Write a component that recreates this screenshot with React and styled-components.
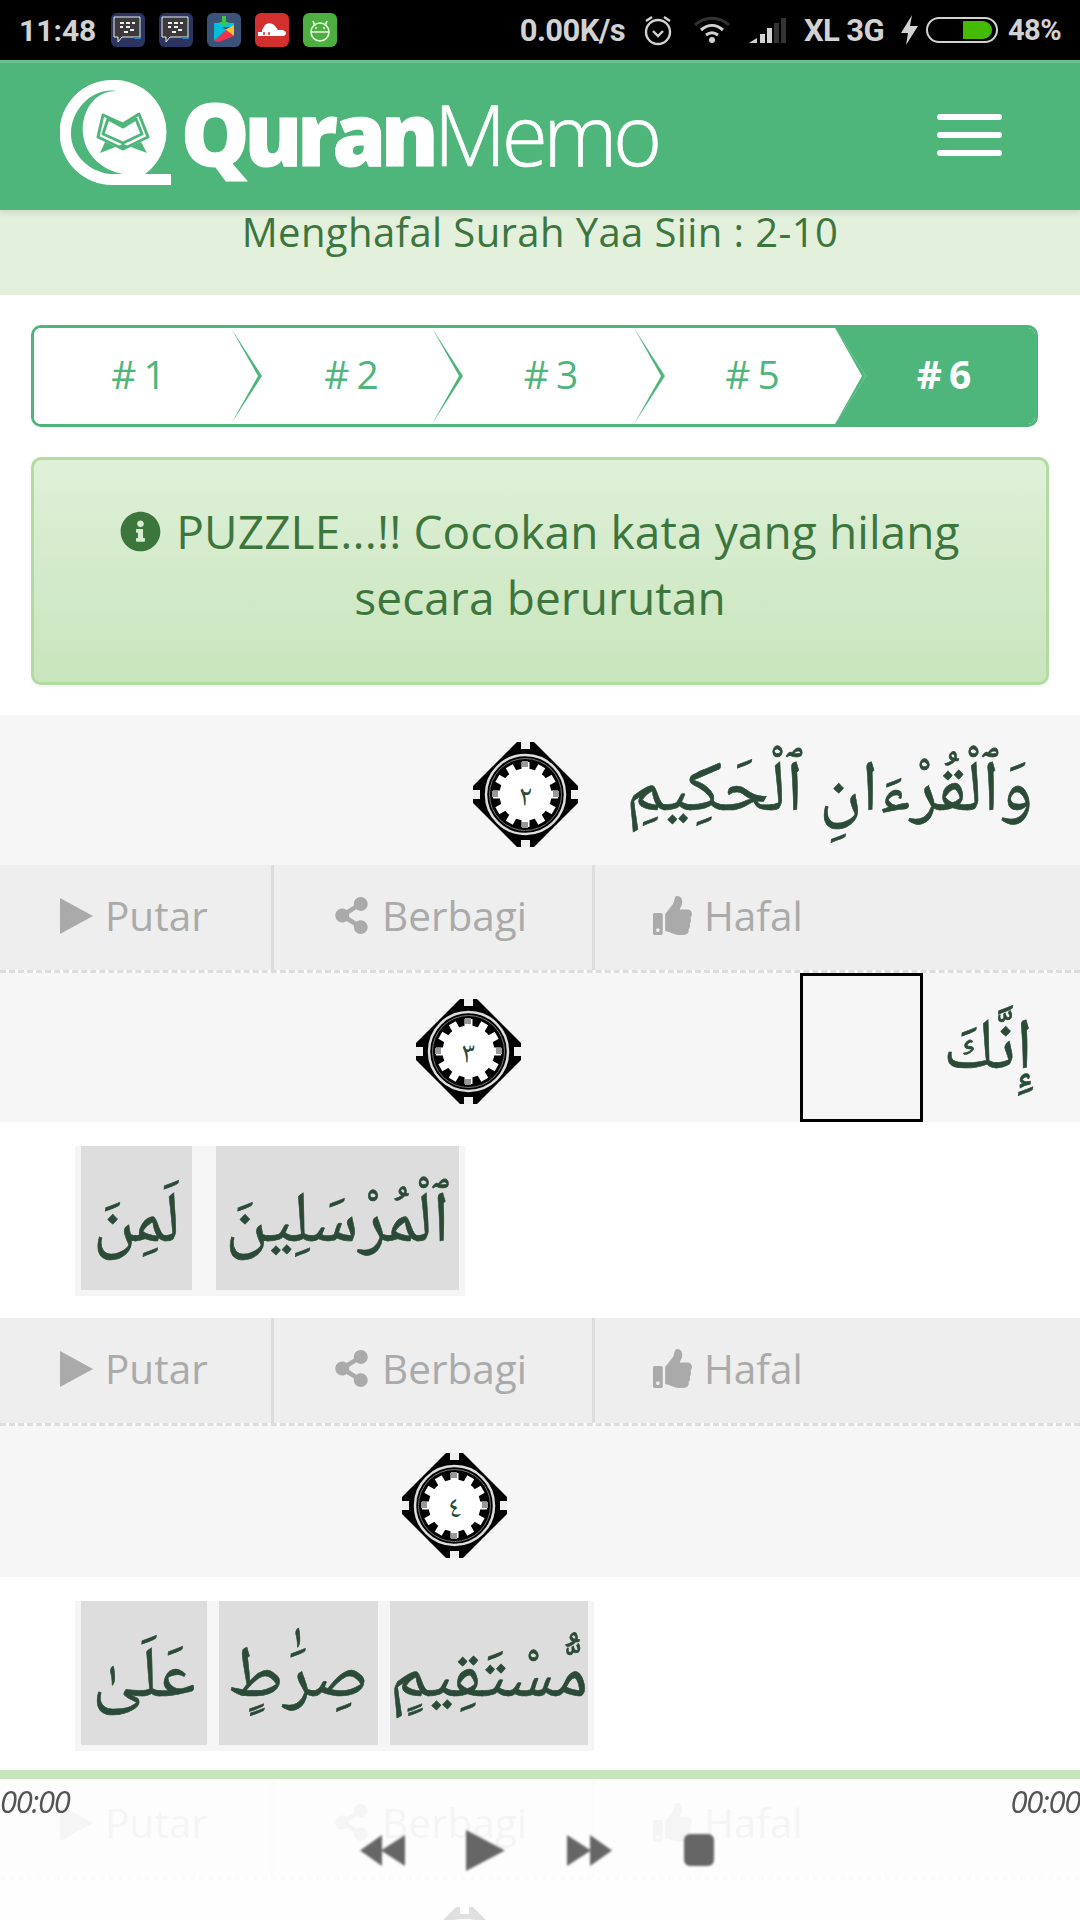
import styled, { createGlobalStyle } from "styled-components";
import { FaInfoCircle, FaShareAlt, FaThumbsUp } from "react-icons/fa";

const GlobalStyle = createGlobalStyle`
  html, body {
    margin: 0;
    padding: 0;
    height: 1920px;
    overflow: hidden;
    background: #fff;
    font-family: "Open Sans", "Noto Sans", sans-serif;
  }
  * { box-sizing: border-box; }
`;

const ARABIC = `"Noto Naskh Arabic", "Amiri", "Scheherazade", "DejaVu Sans", serif`;

const Page = styled.div`
  width: 1080px;
  height: 1920px;
  overflow: hidden;
  position: relative;
`;

/* status bar */
const StatusBar = styled.div`
  height: 60px;
  background: #000;
  color: #d2d2d2;
  display: flex;
  align-items: center;
  padding: 0 19px 0 19px;
  font-family: Roboto, sans-serif;
  font-weight: 700;
`;
const Clock = styled.span`
  font-size: 30px;
  width: 92px;
`;
const Notifs = styled.div`
  display: flex;
  gap: 14px;
`;
const NotifIcon = styled.svg`
  width: 34px;
  height: 34px;
  display: block;
`;
const Tray = styled.div`
  margin-left: auto;
  display: flex;
  align-items: center;
`;
const TrayText = styled.span`
  font-size: ${(p) => p.$size || 31}px;
  letter-spacing: -0.6px;
  margin-left: ${(p) => p.$left || 0}px;
`;
const TrayIcon = styled.svg`
  display: block;
  margin-left: ${(p) => p.$left || 0}px;
`;

/* header */
const Header = styled.header`
  height: 150px;
  background: #4fb67b;
  border-top: 3px solid #6cc190;
  box-shadow: 0 2px 8px rgba(0, 0, 0, 0.12);
  display: flex;
  align-items: center;
  justify-content: space-between;
  padding: 0 78px 0 60px;
  position: relative;
`;
const Logo = styled.div`
  display: flex;
  align-items: baseline;
  color: #fff;
  height: 106px;
  margin-top: -7px;
`;
const LogoMark = styled.svg`
  width: 112px;
  height: 106px;
  align-self: flex-start;
  margin-right: 9px;
`;
const LogoBold = styled.span`
  font-family: "Open Sans", sans-serif;
  font-weight: 800;
  font-size: 86px;
  line-height: 105px;
  letter-spacing: -5px;
  -webkit-text-stroke: 1px #fff;
`;
const LogoLight = styled.span`
  font-family: "Open Sans", sans-serif;
  font-weight: 300;
  font-size: 84px;
  line-height: 105px;
  letter-spacing: -4.5px;
  -webkit-text-stroke: 0.6px #fff;
`;
const Burger = styled.button`
  width: 65px;
  height: 42px;
  padding: 0;
  margin-top: -3px;
  border: 0;
  background: none;
  display: flex;
  flex-direction: column;
  justify-content: space-between;
  span {
    display: block;
    height: 6px;
    background: #fff;
    border-radius: 3px;
  }
`;

const SubBanner = styled.div`
  height: 85px;
  background: #e3f0dc;
  color: #3c763d;
  font-size: 40px;
  line-height: 44px;
  text-align: center;
  letter-spacing: 0.4px;
`;

/* steps */
const Steps = styled.nav`
  margin: 30px 42px 0 31px;
  height: 102px;
  display: flex;
  border: 3px solid #4fb67b;
  border-radius: 10px;
  overflow: hidden;
`;
const Step = styled.div`
  flex: ${(p) => (p.$active ? "1 1 auto" : `0 0 ${p.$w}px`)};
  position: relative;
  display: flex;
  align-items: center;
  justify-content: center;
  padding-left: ${(p) => p.$shift}px;
  padding-bottom: 6px;
  font-size: 39px;
  word-spacing: -3px;
  font-weight: ${(p) => (p.$active ? 700 : 400)};
  color: ${(p) => (p.$active ? "#fff" : "#4fb67b")};
  background: ${(p) => (p.$active ? "#4fb67b" : "#fff")};
  ${(p) =>
    !p.$active &&
    `
    &::before, &::after {
      content: "";
      position: absolute;
      top: 0;
      bottom: 0;
      left: 100%;
      width: 31px;
      z-index: 2;
    }
    &::before {
      background: #fff;
      clip-path: polygon(0 0, 100% 50%, 0 100%);
    }
    &::after {
      background: #4fb67b;
      z-index: 3;
      clip-path: polygon(0 0, 100% 50%, 0 100%, 0 100%, calc(100% - 4px) 50%, 0 0);
    }
  `}
`;

/* alert */
const Alert = styled.div`
  margin: 30px 31px 0 31px;
  height: 228px;
  border: 3px solid #b2dba1;
  border-radius: 10px;
  background: linear-gradient(to bottom, #dff0d8 0, #c8e5bc 100%);
  box-shadow: 0 2px 3px rgba(0, 0, 0, 0.06);
  color: #3c763d;
  font-size: 46px;
  line-height: 66px;
  letter-spacing: 0.1px;
  text-align: center;
  padding: 38px 60px 0;
  text-shadow: 0 1px 0 rgba(255, 255, 255, 0.2);
  svg {
    font-size: 41px;
    vertical-align: -3px;
    margin-right: 15px;
  }
`;

/* verses */
const Verse = styled.div`
  margin-top: ${(p) => p.$top || 0}px;
  height: ${(p) => p.$h || 150}px;
  background: #f6f6f6;
  display: flex;
  flex-direction: row-reverse;
  align-items: center;
  padding-right: 47px;
  flex-shrink: 0;
`;
const VerseText = styled.span`
  font-family: ${ARABIC};
  font-size: 72px;
  line-height: 1;
  padding-top: 10px;
  color: #2b4a38;
  -webkit-text-stroke: 0.6px #2b4a38;
  direction: rtl;
  white-space: nowrap;
`;
const Blank = styled.div`
  width: ${(p) => p.$w}px;
  height: 100%;
  margin-right: ${(p) => p.$gap || 0}px;
  border: ${(p) => (p.$outlined ? "3px solid #000" : "0")};
  flex-shrink: 0;
`;
const Ornament = styled.svg`
  width: 105px;
  height: 105px;
  flex-shrink: 0;
  margin-right: ${(p) => p.$right || 0}px;
  margin-top: 8px;
`;
const OrnamentArt = styled.g`
  filter: blur(0.7px);
`;

function Medallion({ n, right }) {
  const teeth = Array.from({ length: 12 }, (_, i) => i * 30);
  return (
    <Ornament viewBox="0 0 105 105" $right={right}>
      <OrnamentArt>
        <polygon
          points="44,0 61,0 105,44 105,61 61,105 44,105 0,61 0,44"
          fill="#000"
        />
        <g fill="#f0f0f0">
          <rect x="48" y="0" width="9" height="7" />
          <rect x="48" y="98" width="9" height="7" />
          <rect x="0" y="48" width="7" height="9" />
          <rect x="98" y="48" width="7" height="9" />
        </g>
        <circle cx="52.5" cy="52.5" r="39.5" fill="none" stroke="#ddd" strokeWidth="2.5" />
        <circle cx="52.5" cy="52.5" r="36" fill="none" stroke="#777" strokeWidth="1" />
        {teeth.map((a) => (
          <rect
            key={a}
            x="48.5"
            y="20"
            width="8"
            height="12"
            fill="#fff"
            transform={`rotate(${a} 52.5 52.5)`}
          />
        ))}
        <circle cx="52.5" cy="52.5" r="26" fill="#fff" />
        <g fill="#999">
          <rect x="49" y="19" width="6" height="6" />
          <rect x="49" y="80" width="6" height="6" />
          <rect x="19" y="49" width="6" height="6" />
          <rect x="80" y="49" width="6" height="6" />
        </g>
      </OrnamentArt>
      {n && (
        <text
          x="52.5"
          y="64"
          textAnchor="middle"
          fontSize="30"
          fill="#2b4a38"
          fontFamily={ARABIC}
        >
          {n}
        </text>
      )}
    </Ornament>
  );
}

/* action bar */
const Actions = styled.div`
  height: 105px;
  background: #eee;
  display: flex;
  flex-shrink: 0;
`;
const Action = styled.div`
  width: ${(p) => p.$w}px;
  padding: 0 0 4px ${(p) => p.$pad}px;
  border-right: ${(p) => (p.$divider ? "3px solid #ddd" : "0")};
  display: flex;
  align-items: center;
  color: #aaa;
  font-size: 40.5px;
  svg {
    margin-right: 12px;
    flex-shrink: 0;
  }
`;
const Dashes = styled.div`
  height: 3px;
  border-top: 3px dashed #ddd;
`;

/* word choices */
const PoolWrap = styled.div`
  background: #fff;
  height: ${(p) => p.$h}px;
  padding: 24px 0 0 75px;
`;
const Pool = styled.div`
  display: inline-flex;
  height: 150px;
  gap: ${(p) => p.$gap}px;
  padding: 0 6px 6px;
  background: #f5f5f5;
`;
const Chip = styled.div`
  width: ${(p) => p.$w}px;
  background: #ddd;
  display: flex;
  align-items: center;
  justify-content: center;
  padding-top: 16px;
  font-family: ${ARABIC};
  font-size: 72px;
  line-height: 1;
  color: #2b4a38;
  -webkit-text-stroke: 0.6px #2b4a38;
  direction: rtl;
  white-space: nowrap;
`;

/* player */
const Player = styled.div`
  position: fixed;
  left: 0;
  right: 0;
  bottom: 0;
  height: 150px;
  background: rgba(255, 255, 255, 0.88);
  border-top: 9px solid #c8e5bc;
`;
const Times = styled.div`
  display: flex;
  justify-content: space-between;
  font-size: 31px;
  line-height: 44px;
  font-style: italic;
  color: #555;
  letter-spacing: -1.3px;
`;
const Controls = styled.div`
  display: flex;
  align-items: center;
  height: 42px;
  margin: 6px 0 0 360px;
  svg { display: block; filter: blur(0.9px); }
`;
const Ctrl = styled.svg`
  margin-right: ${(p) => p.$gap}px;
`;
const PlayGlyph = styled.svg`
  width: 33px;
  height: 36px;
`;

const Play = () => (
  <PlayGlyph viewBox="0 0 33 36">
    <polygon points="0,0 33,18 0,36" fill="#aaa" />
  </PlayGlyph>
);

function ActionBar() {
  return (
    <Actions>
      <Action $w={274} $pad={60} $divider>
        <Play />
        Putar
      </Action>
      <Action $w={321} $pad={59} $divider>
        <FaShareAlt size={37} />
        Berbagi
      </Action>
      <Action $w={340} $pad={58}>
        <FaThumbsUp size={39} />
        Hafal
      </Action>
    </Actions>
  );
}

const BbmIcon = () => (
  <NotifIcon viewBox="0 0 34 34">
    <rect width="34" height="34" rx="6" fill="#2c3560" />
    <path d="M3 4h26v20H11l-4 5v-5H3z" fill="#3b3b3b" stroke="#eee" strokeWidth="1" />
    <path d="M24 26l6 0 0-2-8 0z" fill="#1c8ad0" />
    <g fill="#eee">
      <rect x="9" y="9" width="4" height="2" />
      <rect x="15" y="9" width="4" height="2" />
      <rect x="21" y="9" width="3" height="2" />
      <rect x="9" y="13" width="3" height="2" />
      <rect x="15" y="13" width="4" height="2" />
      <rect x="13" y="18" width="4" height="2" />
      <rect x="19" y="16" width="4" height="2" />
    </g>
  </NotifIcon>
);

export default function App() {
  return (
    <Page>
      <GlobalStyle />
      <StatusBar>
        <Clock>11:48</Clock>
        <Notifs>
          <BbmIcon />
          <BbmIcon />
          <NotifIcon viewBox="0 0 34 34">
            <rect width="34" height="34" rx="6" fill="#3b5378" />
            <polygon points="7,10 27,10 27,14 7,14" fill="#00c4f0" />
            <polygon points="7,10 20,17 7,28" fill="#00bcd4" />
            <polygon points="18,17 27,12 27,23" fill="#fbc02d" />
            <polygon points="7,28 19,17 27,23 12,29" fill="#f0324f" />
            <path d="M15 3h4v6h3l-5 5-5-5h3z" fill="#3ec34b" />
          </NotifIcon>
          <NotifIcon viewBox="0 0 34 34">
            <rect width="34" height="34" rx="6" fill="#d32f2f" />
            <path d="M3 19h4v-2l3-5c3-3 8-2 10 1l3 4h4c2 0 4 2 4 3s-1 3-3 3H3z" fill="#fff" />
            <path d="M9 22v-3M14 22v-3" stroke="#d32f2f" strokeWidth="1.5" />
          </NotifIcon>
          <NotifIcon viewBox="0 0 34 34">
            <rect width="34" height="34" rx="6" fill="#4caf3f" />
            <circle cx="17" cy="19" r="9" fill="none" stroke="#e8f5e0" strokeWidth="1.6" />
            <path d="M9 19h16M10 8l2 5M24 8l-2 5" stroke="#e8f5e0" strokeWidth="1.6" />
            <circle cx="13" cy="15" r="1" fill="#e8f5e0" />
            <circle cx="21" cy="15" r="1" fill="#e8f5e0" />
          </NotifIcon>
        </Notifs>
        <Tray>
          <TrayText>0.00K/s</TrayText>
          <TrayIcon $left={18} width="30" height="32" viewBox="0 0 30 32" fill="none" stroke="#d2d2d2" strokeWidth="2.4">
            <circle cx="15" cy="18" r="12" />
            <path d="M10 17l5 5 5-5M3 7l6-4M27 7l-6-4" />
          </TrayIcon>
          <TrayIcon $left={20} width="38" height="28" viewBox="0 0 38 28" fill="none" strokeWidth="3">
            <path d="M2 9c10-9 24-9 34 0" stroke="#333" />
            <path d="M8 14c7-6 15-6 22 0M13 19c4-3 8-3 12 0" stroke="#d2d2d2" />
            <circle cx="19" cy="24" r="3" fill="#d2d2d2" />
          </TrayIcon>
          <TrayIcon $left={18} width="37" height="26" viewBox="0 0 37 26">
            <polygon points="0,26 8,21 8,26" fill="#d2d2d2" />
            <rect x="11" y="17" width="5" height="9" fill="#d2d2d2" />
            <rect x="18" y="11" width="5" height="15" fill="#d2d2d2" />
            <rect x="25" y="6" width="5" height="20" fill="#333" />
            <rect x="32" y="1" width="5" height="25" fill="#333" />
          </TrayIcon>
          <TrayText $left={18}>XL 3G</TrayText>
          <TrayIcon $left={17} width="17" height="30" viewBox="0 0 17 30">
            <polygon points="11,0 0,18 7,18 5,30 17,11 9,11" fill="#d2d2d2" />
          </TrayIcon>
          <TrayIcon $left={8} width="72" height="26" viewBox="0 0 72 26">
            <rect x="1" y="1" width="70" height="24" rx="12" fill="none" stroke="#d2d2d2" strokeWidth="2" />
            <path d="M37 4h20a9 9 0 0 1 9 9 9 9 0 0 1-9 9H37z" fill="#44bb00" />
          </TrayIcon>
          <TrayText $left={10} $size={29}>48%</TrayText>
        </Tray>
      </StatusBar>

      <Header>
        <Logo>
          <LogoMark viewBox="0 0 112 106">
            <path d="M52 0a52 52 0 1 0 0 105h59V94H85a52 52 0 0 0-33-94z" fill="#fff" />
            <path
              d="M56 11C34 11 21 32 23 54c2 20 18 36 40 40l-12 0C27 92 10 72 11 52 12 28 34 7 56 11z"
              fill="#4fb67b"
            />
            <g fill="#fff" stroke="#4fb67b" strokeWidth="3" strokeLinejoin="round">
              <path d="M43 35l20 9 16-10 9 23-25 12-25-12z" />
              <path d="M63 44v25" />
              <path d="M48 39l15 8 13-8 6 15-19 9-20-9z" />
            </g>
            <path d="M40 73l23-9 24 9-6-11-18 8-18-8z" fill="#4fb67b" />
          </LogoMark>
          <LogoBold>Quran</LogoBold>
          <LogoLight>Memo</LogoLight>
        </Logo>
        <Burger aria-label="menu">
          <span />
          <span />
          <span />
        </Burger>
      </Header>

      <SubBanner>Menghafal Surah Yaa Siin : 2-10</SubBanner>

      <Steps>
        <Step $w={197} $shift={12}># 1</Step>
        <Step $w={201} $shift={40}># 2</Step>
        <Step $w={202} $shift={36}># 3</Step>
        <Step $w={201} $shift={36}># 5</Step>
        <Step $active $shift={18}># 6</Step>
      </Steps>

      <Alert>
        <FaInfoCircle />
        PUZZLE...!! Cocokan kata yang hilang secara berurutan
      </Alert>

      <Verse $top={30}>
        <VerseText>وَٱلْقُرْءَانِ ٱلْحَكِيمِ</VerseText>
        <Medallion n="٢" right={48} />
      </Verse>
      <ActionBar />
      <Dashes />
      <Verse $h={149}>
        <VerseText>إِنَّكَ</VerseText>
        <Blank $w={123} $gap={20} $outlined />
        <Blank $w={279} />
        <Medallion n="٣" />
      </Verse>
      <PoolWrap $h={196}>
        <Pool $gap={24}>
          <Chip $w={111}>لَمِنَ</Chip>
          <Chip $w={243}>ٱلْمُرْسَلِينَ</Chip>
        </Pool>
      </PoolWrap>
      <ActionBar />
      <Dashes />
      <Verse $h={151}>
        <Blank $w={526} />
        <Medallion n="٤" />
      </Verse>
      <PoolWrap $h={195}>
        <Pool $gap={12}>
          <Chip $w={126}>عَلَىٰ</Chip>
          <Chip $w={159}>صِرَٰطٍ</Chip>
          <Chip $w={198}>مُّسْتَقِيمٍ</Chip>
        </Pool>
      </PoolWrap>
      <ActionBar />
      <Dashes />
      <Verse $h={150}>
        <Blank $w={516} />
        <Medallion />
      </Verse>

      <Player>
        <Times>
          <span>00:00</span>
          <span>00:00</span>
        </Times>
        <Controls>
          <Ctrl $gap={61} width="45" height="31" viewBox="0 0 45 31" fill="#666">
            <polygon points="0,15.5 22,0 22,31" />
            <polygon points="21,15.5 45,0 45,31" />
          </Ctrl>
          <Ctrl $gap={62} width="39" height="41" viewBox="0 0 39 41" fill="#666">
            <polygon points="0,0 39,20.5 0,41" />
          </Ctrl>
          <Ctrl $gap={72} width="45" height="31" viewBox="0 0 45 31" fill="#666">
            <polygon points="0,0 24,15.5 0,31" />
            <polygon points="23,0 45,15.5 23,31" />
          </Ctrl>
          <Ctrl $gap={0} width="30" height="32" viewBox="0 0 30 32" fill="#666">
            <rect width="30" height="32" rx="6" />
          </Ctrl>
        </Controls>
      </Player>
    </Page>
  );
}
